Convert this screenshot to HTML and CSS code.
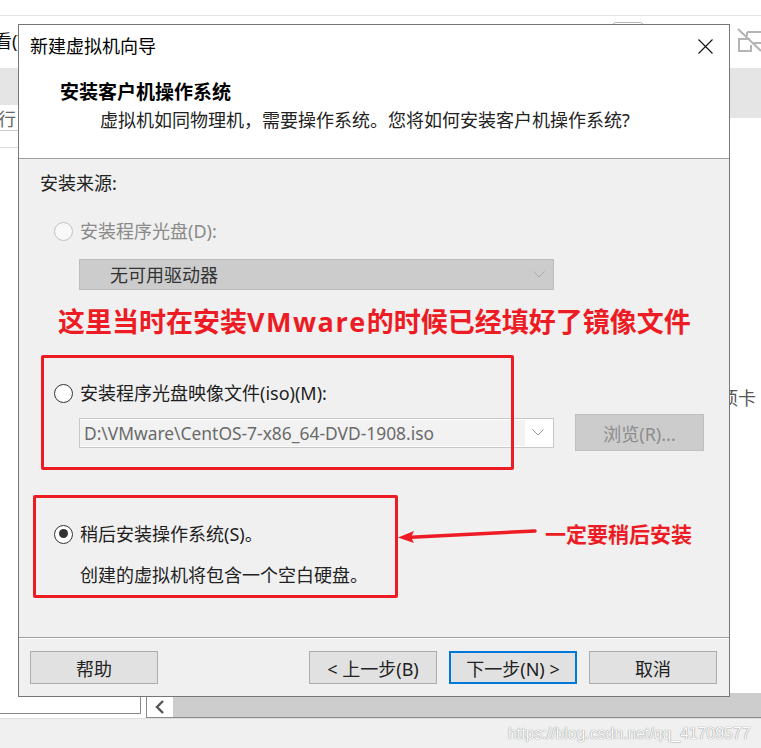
FILE: index.html
```html
<!DOCTYPE html>
<html lang="zh-CN">
<head>
<meta charset="utf-8">
<title>新建虚拟机向导</title>
<link rel="stylesheet" href="styles.css">
</head>
<body>
<div class="screen">
  <div class="backdrop">
    <div class="bd-top"></div>
    <div class="bd-main">
      <div class="bd-left">
        <div class="bd-menu">看(V)</div>
        <div class="bd-band"></div>
        <div class="bd-row">行</div>
        <div class="bd-line"></div>
      </div>
      <div class="bd-center"><div class="bd-tab"></div></div>
      <div class="bd-right">
        <svg class="bd-icon" width="24" height="24" viewBox="0 0 24 24">
          <path d="M1 1 L24 23" stroke="#b4b4b4" stroke-width="2" fill="none"/>
          <path d="M13 11 H2 V23 H14 V17" stroke="#b4b4b4" stroke-width="2" fill="none"/>
          <path d="M10 4 H24 M10 4 V8 M17 15 H24" stroke="#b4b4b4" stroke-width="2" fill="none"/>
        </svg>
        <div class="bd-band bd-band-r"></div>
        <div class="bd-tabtext">选项卡</div>
      </div>
    </div>
    <div class="bd-bottom">
      <div class="bd-box"></div>
      <div class="bd-scroll">
        <div class="bd-arrow">
          <svg width="10" height="14" viewBox="0 0 10 14"><path d="M8 1 L2 7 L8 13" stroke="#555" stroke-width="2.4" fill="none"/></svg>
        </div>
        <div class="bd-track"></div>
      </div>
    </div>
    <div class="bd-status"><span class="watermark">https://blog.csdn.net/qq_41709577</span></div>
  </div>

  <div class="dialog">
    <div class="dlg-header">
      <div class="titlebar">
        <span class="title">新建虚拟机向导</span>
        <svg class="close" width="15" height="15" viewBox="0 0 15 15">
          <path d="M0.5 0.5 L14.5 14.5 M14.5 0.5 L0.5 14.5" stroke="#111" stroke-width="1.1" fill="none"/>
        </svg>
      </div>
      <div class="heading">安装客户机操作系统</div>
      <div class="subtitle">虚拟机如同物理机，需要操作系统。您将如何安装客户机操作系统?</div>
    </div>

    <div class="dlg-body">
      <div class="section-label">安装来源:</div>

      <div class="radio-row disabled">
        <span class="radio"></span>
        <span class="label">安装程序光盘(D):</span>
      </div>
      <div class="select">
        <span class="select-text">无可用驱动器</span>
        <svg class="chev" width="12" height="7" viewBox="0 0 12 7"><path d="M0.5 0.5 L6 6 L11.5 0.5" stroke="#a8a8a8" stroke-width="1" fill="none"/></svg>
      </div>

      <div class="radio-row gap-iso">
        <span class="radio"></span>
        <span class="label">安装程序光盘映像文件(iso)(M):</span>
      </div>
      <div class="file-row">
        <div class="combo">
          <span class="combo-text">D:\VMware\CentOS-7-x86_64-DVD-1908.iso</span>
          <span class="combo-btn">
            <svg width="12" height="7" viewBox="0 0 12 7"><path d="M0.5 0.5 L6 6 L11.5 0.5" stroke="#999" stroke-width="1" fill="none"/></svg>
          </span>
        </div>
        <div class="browse">浏览(R)...</div>
      </div>

      <div class="radio-row gap-later">
        <span class="radio checked"></span>
        <span class="label">稍后安装操作系统(S)。</span>
      </div>
      <div class="desc">创建的虚拟机将包含一个空白硬盘。</div>

      <div class="note note-main">这里当时在安装<span class="latin">VMware</span>的时候已经填好了镜像文件</div>
      <div class="mark mark-iso"></div>
      <div class="mark mark-later"></div>
      <svg class="arrow" width="145" height="20" viewBox="0 0 145 20">
        <path d="M16 12.2 L140 6" stroke="#ed1c24" stroke-width="3.5" fill="none" stroke-linecap="round"/>
        <path d="M3 12.5 L19 6 L16 12.3 L19 18 Z" fill="#ed1c24"/>
      </svg>
      <div class="note note-later">一定要稍后安装</div>
    </div>

    <div class="dlg-footer">
      <div class="btn">帮助</div>
      <div class="btn push">&lt; 上一步(B)</div>
      <div class="btn primary">下一步(N) &gt;</div>
      <div class="btn">取消</div>
    </div>
  </div>
</div>
</body>
</html>
```

FILE: styles.css
```css
* { box-sizing: border-box; }

html, body {
  margin: 0;
  padding: 0;
  background: #ffffff;
}

body {
  font-family: "Noto Sans", "Noto Sans CJK SC", sans-serif;
  font-size: 18px;
  color: #1e1e1e;
}

.screen {
  position: relative;
  width: 761px;
  height: 748px;
  overflow: hidden;
}

/* ---------- background application ---------- */
.backdrop {
  display: flex;
  flex-direction: column;
  width: 761px;
  height: 748px;
}

.bd-top {
  height: 16px;
  border-bottom: 1px solid #e3e3e3;
  flex: none;
}

.bd-main {
  display: flex;
  height: 677px;
  flex: none;
}

.bd-left {
  width: 18px;
  overflow: hidden;
  flex: none;
}

.bd-menu {
  margin-top: 13px;
  margin-left: -6px;
  line-height: 24px;
  white-space: nowrap;
  color: #111;
}

.bd-band {
  margin-top: 15px;
  height: 37px;
  background: #e5e5e5;
}

.bd-row {
  margin-left: -2px;
  padding-top: 3px;
  line-height: 22px;
  height: 26px;
  color: #666;
  border-bottom: 1px solid #cfcfcf;
  white-space: nowrap;
}

.bd-line {
  margin-top: 16px;
  height: 1px;
  background: #dcdcdc;
}

.bd-center {
  width: 712px;
  flex: none;
}

.bd-tab {
  margin-top: 6px;
  margin-left: 594px;
  width: 32px;
  height: 10px;
  border: 1px solid #bbbbbb;
  border-radius: 4px;
}

.bd-right {
  width: 31px;
  overflow: hidden;
  flex: none;
}

.bd-icon {
  display: block;
  margin-top: 12px;
  margin-left: 7px;
}

.bd-band-r {
  margin-top: 16px;
  height: 50px;
}

.bd-tabtext {
  margin-top: 268px;
  margin-left: -28px;
  line-height: 24px;
  white-space: nowrap;
  color: #555;
}

.bd-bottom {
  display: flex;
  height: 25px;
  flex: none;
  background: #ffffff;
}

.bd-box {
  width: 141px;
  height: 21px;
  border-right: 1px solid #8a8a8a;
  border-bottom: 1px solid #8a8a8a;
  background: #fff;
}

.bd-scroll {
  margin-left: 5px;
  flex: 1;
  display: flex;
  border-left: 1px solid #8a8a8a;
  border-bottom: 1px solid #8a8a8a;
}

.bd-arrow {
  width: 26px;
  display: flex;
  align-items: center;
  justify-content: center;
  background: #fff;
  padding-top: 3px;
}

.bd-track {
  flex: 1;
  background: #cdcdcd;
}

.bd-status {
  flex: 1;
  background: #f0f0f0;
  border-top: 1px solid #dedede;
  padding-left: 508px;
  padding-top: 1px;
}

.watermark {
  font-family: "Liberation Sans", Arial, sans-serif;
  font-size: 15.8px;
  line-height: 26px;
  color: #fbfbfb;
  text-shadow: 0 0 1px #8c8c8c, 0 0 1px #a0a0a0;
  white-space: nowrap;
}

/* ---------- dialog window ---------- */
.dialog {
  position: absolute;
  left: 18px;
  top: 24px;
  width: 712px;
  height: 673px;
  border: 1px solid #767676;
  background: #ffffff;
  display: flex;
  flex-direction: column;
  z-index: 2;
}

.dlg-header {
  height: 134px;
  flex: none;
  padding-top: 9px;
  border-bottom: 1px solid #a0a0a0;
  background: #fff;
}

.titlebar {
  display: flex;
  align-items: center;
  justify-content: space-between;
  height: 24px;
  padding: 0 16px 0 11px;
}

.title {
  line-height: 24px;
  color: #000;
}

.close { display: block; }

.heading {
  margin-top: 22px;
  padding-left: 41px;
  font-size: 19px;
  font-weight: 700;
  line-height: 24px;
  color: #000;
}

.subtitle {
  margin-top: 4px;
  padding-left: 81px;
  line-height: 24px;
  color: #222;
}

.dlg-body {
  position: relative;
  height: 478px;
  flex: none;
  padding: 12px 0 0 21px;
  background: #f0f0f0;
}

.section-label {
  line-height: 24px;
  color: #222;
}

.radio-row {
  display: flex;
  align-items: center;
  gap: 7px;
  height: 24px;
  margin-top: 24px;
  margin-left: 14px;
}

.radio-row.gap-iso { margin-top: 91px; }
.radio-row.gap-later { margin-top: 71px; }

.label {
  line-height: 24px;
  color: #1e1e1e;
  white-space: nowrap;
}

.radio {
  position: relative;
  width: 19px;
  height: 19px;
  border-radius: 50%;
  border: 1.5px solid #333;
  background: #fff;
  flex: none;
}

.radio.checked::after {
  content: "";
  position: absolute;
  left: 3.5px;
  top: 3.5px;
  width: 9px;
  height: 9px;
  border-radius: 50%;
  background: #333;
}

.radio-row.disabled .radio {
  border-color: #c2c2c2;
  background: #f8f8f8;
}

.radio-row.disabled .label { color: #8a8a8a; }

.select {
  margin-top: 16px;
  margin-left: 39px;
  width: 475px;
  height: 31px;
  display: flex;
  align-items: center;
  justify-content: space-between;
  padding: 0 8px 0 30px;
  background: #cccccc;
  border: 1px solid #bcbcbc;
}

.select-text {
  color: #333;
  line-height: 24px;
}

.chev { display: block; }

.file-row {
  margin-top: 9px;
  margin-left: 39px;
  height: 37px;
  display: flex;
  align-items: center;
  gap: 21px;
}

.combo {
  width: 475px;
  height: 30px;
  display: flex;
  background: #fff;
  border: 1px solid #c8c8c8;
}

.combo-text {
  flex: 1;
  margin: 1px 0 1px 0;
  padding-left: 4px;
  background: #f2f2f2;
  color: #6a6a6a;
  font-size: 17.4px;
  line-height: 26px;
  white-space: nowrap;
  overflow: hidden;
}

.combo-btn {
  width: 28px;
  display: flex;
  align-items: center;
  justify-content: center;
  padding-right: 2px;
}

.browse {
  width: 129px;
  height: 37px;
  display: flex;
  align-items: center;
  justify-content: center;
  background: #cccccc;
  border: 1px solid #bfbfbf;
  color: #8c8c8c;
}

.desc {
  margin-top: 17px;
  padding-left: 40px;
  line-height: 24px;
  color: #222;
}

/* ---------- annotations ---------- */
.note {
  position: absolute;
  font-family: "Open Sans", "Noto Sans CJK SC", sans-serif;
  font-weight: 700;
  color: #ed1c24;
  white-space: nowrap;
}

.note-main {
  left: 39px;
  top: 145px;
  font-size: 27px;
  line-height: 36px;
}

.note-main .latin { letter-spacing: 1.5px; }

.note-later {
  left: 526px;
  top: 361px;
  font-size: 21px;
  line-height: 28px;
}

.mark {
  position: absolute;
  border: 3px solid #ed1c24;
  border-radius: 2px;
}

.mark-iso {
  left: 22px;
  top: 196px;
  width: 473px;
  height: 115px;
}

.mark-later {
  left: 14px;
  top: 336px;
  width: 365px;
  height: 103px;
}

.arrow {
  position: absolute;
  left: 376px;
  top: 366px;
}

/* ---------- footer ---------- */
.dlg-footer {
  flex: 1;
  display: flex;
  gap: 12px;
  padding: 13px 12px 0 11px;
  border-top: 1px solid #a0a0a0;
  box-shadow: inset 0 1px 0 #ffffff;
  background: #f0f0f0;
}

.btn {
  width: 128px;
  height: 33px;
  display: flex;
  align-items: center;
  justify-content: center;
  background: #e1e1e1;
  border: 1px solid #adadad;
  color: #222;
  white-space: nowrap;
}

.btn.push { margin-left: auto; }

.btn.primary {
  border: 2px solid #0078d7;
}
```
